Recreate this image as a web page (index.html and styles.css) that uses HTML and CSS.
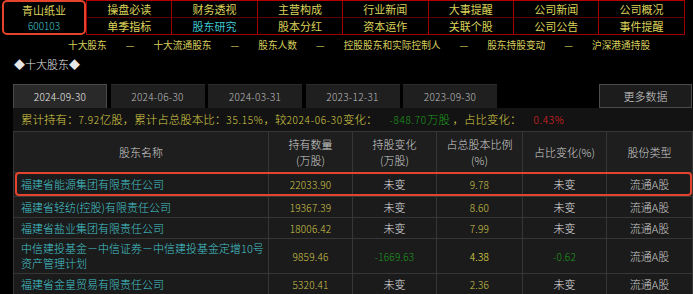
FILE: index.html
```html
<!DOCTYPE html>
<html lang="zh-CN">

<head>
    <meta charset="UTF-8">
    <title>青山纸业 股东研究</title>
    <link rel="stylesheet" href="styles.css">
</head>

<body>
    <div class="topnav">
        <div class="stock">
            <div class="stock-name">青山纸业</div>
            <div class="stock-code">600103</div>
        </div>
        <div class="menu">
            <a class="menu-item">操盘必读</a>
            <a class="menu-item">财务透视</a>
            <a class="menu-item">主营构成</a>
            <a class="menu-item">行业新闻</a>
            <a class="menu-item">大事提醒</a>
            <a class="menu-item">公司新闻</a>
            <a class="menu-item">公司概况</a>
            <a class="menu-item">单季指标</a>
            <a class="menu-item active">股东研究</a>
            <a class="menu-item">股本分红</a>
            <a class="menu-item">资本运作</a>
            <a class="menu-item">关联个股</a>
            <a class="menu-item">公司公告</a>
            <a class="menu-item">事件提醒</a>
        </div>
    </div>

    <div class="subnav">
        <span>十大股东</span><span class="dash">—</span>
        <span>十大流通股东</span><span class="dash">—</span>
        <span>股东人数</span><span class="dash">—</span>
        <span>控股股东和实际控制人</span><span class="dash">—</span>
        <span>股东持股变动</span><span class="dash">—</span>
        <span>沪深港通持股</span>
    </div>

    <div class="section-title">◆十大股东◆</div>

    <div class="panel">
        <div class="tabs">
            <div class="tab active">2024-09-30</div>
            <div class="tab">2024-06-30</div>
            <div class="tab">2024-03-31</div>
            <div class="tab">2023-12-31</div>
            <div class="tab">2023-09-30</div>
            <div class="more">更多数据</div>
        </div>

        <div class="summary">
            累计持有：<span class="n">7.92</span>亿股，累计占总股本比：<span class="n">35.15%</span>，较<span class="n">2024-06-30</span>变化：<span class="n down gap">-848.70</span><span class="down">万股</span> ，占比变化：<span class="n up gap">0.43%</span>
        </div>

        <div class="table-wrap">
            <table class="holders">
                <colgroup>
                    <col class="c-name">
                    <col class="c-mid">
                    <col class="c-mid">
                    <col class="c-wide">
                    <col class="c-mid">
                    <col class="c-wide">
                </colgroup>
                <thead>
                    <tr>
                        <th>股东名称</th>
                        <th>持有数量<br>(万股)</th>
                        <th>持股变化<br>(万股)</th>
                        <th>占总股本比例<br>(%)</th>
                        <th>占比变化(%)</th>
                        <th>股份类型</th>
                    </tr>
                </thead>
                <tbody>
                    <tr class="first">
                        <td class="name">福建省能源集团有限责任公司</td>
                        <td class="num">22033.90</td>
                        <td class="same">未变</td>
                        <td class="num">9.78</td>
                        <td class="same">未变</td>
                        <td class="type">流通A股</td>
                    </tr>
                    <tr>
                        <td class="name">福建省轻纺(控股)有限责任公司</td>
                        <td class="num">19367.39</td>
                        <td class="same">未变</td>
                        <td class="num">8.60</td>
                        <td class="same">未变</td>
                        <td class="type">流通A股</td>
                    </tr>
                    <tr>
                        <td class="name">福建省盐业集团有限责任公司</td>
                        <td class="num">18006.42</td>
                        <td class="same">未变</td>
                        <td class="num">7.99</td>
                        <td class="same">未变</td>
                        <td class="type">流通A股</td>
                    </tr>
                    <tr class="tall">
                        <td class="name">中信建投基金－中信证券－中信建投基金定增10号<br>资产管理计划</td>
                        <td class="num">9859.46</td>
                        <td class="num down">-1669.63</td>
                        <td class="num bright">4.38</td>
                        <td class="num down">-0.62</td>
                        <td class="type">流通A股</td>
                    </tr>
                    <tr>
                        <td class="name">福建省金皇贸易有限责任公司</td>
                        <td class="num">5320.41</td>
                        <td class="same">未变</td>
                        <td class="num">2.36</td>
                        <td class="same">未变</td>
                        <td class="type">流通A股</td>
                    </tr>
                </tbody>
            </table>
            <div class="highlight"></div>
        </div>
    </div>
</body>

</html>
```

FILE: styles.css
```css
* {
    box-sizing: border-box;
}

body {
    margin: 0;
    width: 693px;
    height: 294px;
    overflow: hidden;
    background-color: #000;
    font-family: "Noto Sans CJK SC", sans-serif;
    font-weight: 300;
}

/* top menu */
.topnav {
    display: flex;
    height: 35px;
}

.stock {
    width: 84px;
    height: 35px;
    margin-left: 2px;
    border: 2px solid #e4432d;
    border-radius: 5px;
    display: flex;
    flex-direction: column;
    align-items: center;
    justify-content: center;
}

.stock-name {
    color: #dcd25a;
    font-size: 11px;
    line-height: 16px;
    font-weight: normal;
}

.stock-code {
    color: #3fc6cf;
    font-size: 10px;
    line-height: 15px;
}

.menu {
    display: grid;
    grid-template-columns: repeat(7, 85.4px);
    grid-template-rows: 17px 17px;
    height: 35px;
    border-top: 1px solid #b40000;
    border-left: 1px solid #a00000;
}

.menu-item {
    border-right: 1px solid #a00000;
    border-bottom: 1px solid #a00000;
    color: #dcd25a;
    font-size: 11px;
    font-weight: normal;
    line-height: 16px;
    text-align: center;
}

.menu-item:nth-child(-n+7) {
    border-bottom-color: #5e0000;
}

.menu-item.active {
    color: #3fc6cf;
}

/* sub menu */
.subnav {
    display: flex;
    gap: 19px;
    height: 21px;
    padding-left: 68px;
    color: #d8ce5c;
    font-size: 9.7px;
    font-weight: normal;
    line-height: 21px;
    white-space: nowrap;
}

.section-title {
    padding-left: 14px;
    color: #e6e6e6;
    font-size: 11px;
    line-height: 16px;
    margin-bottom: 12px;
}

.panel {
    margin-left: 13px;
    width: 680px;
}

/* date tabs */
.tabs {
    display: flex;
    gap: 3.5px;
    height: 24px;
}

.tab {
    width: 94px;
    background-color: #1f1f1f;
    border-top: 1px solid #2c2c2c;
    color: #bdbdbd;
    font-size: 10px;
    line-height: 23px;
    letter-spacing: 0.3px;
    text-align: center;
}

.tab.active {
    background-color: #292929;
    border: 1px solid #4a4a4a;
    border-bottom: none;
    color: #ededed;
}

.more {
    margin-left: auto;
    margin-right: 1px;
    width: 93px;
    background-color: #1c1c1c;
    border: 1px solid #4c4c4c;
    color: #cfcfcf;
    font-size: 11px;
    line-height: 22px;
    text-align: center;
}

.summary {
    height: 23px;
    padding-left: 8px;
    background-color: #131313;
    color: #d8cc48;
    font-size: 11.5px;
    line-height: 23px;
    white-space: nowrap;
}

.n {
    font-size: 10px;
    letter-spacing: 0.7px;
}

.gap {
    margin-left: 12px;
}

.down {
    color: #1d9c1d;
}

.up {
    color: #e02424;
}

/* holders table */
.table-wrap {
    position: relative;
}

.holders {
    width: 680px;
    border-collapse: collapse;
    table-layout: fixed;
}

.c-name {
    width: 255px;
}

.c-mid {
    width: 84px;
}

.c-wide {
    width: 86px;
}

.holders th,
.holders td {
    border: 1px solid #363636;
    padding: 0;
    text-align: center;
    font-size: 11px;
}

.holders th {
    height: 41px;
    background-color: #1e1e1e;
    color: #cfcfcf;
    font-weight: 300;
    line-height: 16px;
}

.holders td {
    height: 21px;
    background-color: #1b1b1b;
    line-height: 15px;
}

.holders tr.first td {
    height: 24px;
}

.holders tr.tall td {
    height: 35px;
}

.holders td.name {
    text-align: left;
    padding-left: 7px;
    color: #45c4cc;
}

.holders td.num {
    color: #cfc349;
    font-size: 10px;
    letter-spacing: 0.2px;
}

.holders td.num.down {
    color: #1d9c1d;
}

.holders td.num.bright {
    color: #e6e04a;
}

.holders td.same {
    color: #e2e2e2;
}

.holders td.type {
    color: #cccccc;
}

.highlight {
    position: absolute;
    left: 2px;
    top: 41px;
    width: 677px;
    height: 24px;
    border: 2px solid #e4432d;
    border-radius: 4px;
}
```
